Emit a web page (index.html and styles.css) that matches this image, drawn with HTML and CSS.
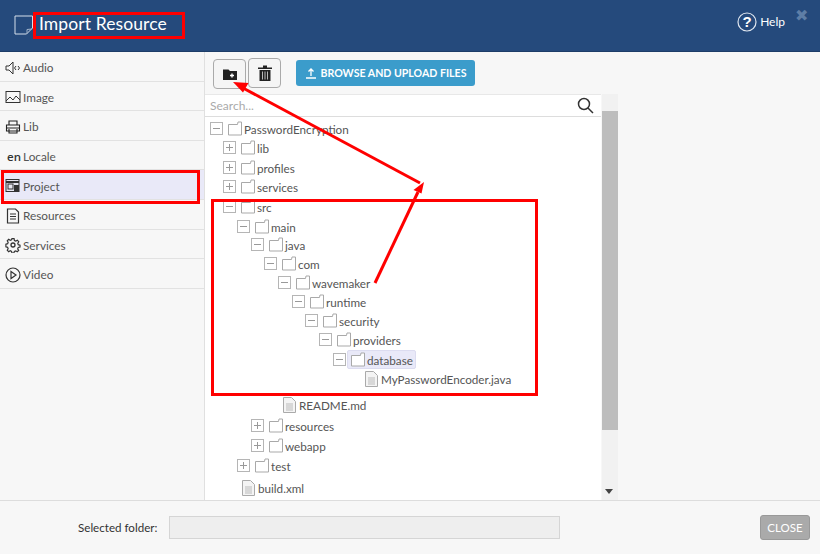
FILE: index.html
```html
<!DOCTYPE html>
<html lang="en">
<head>
<meta charset="utf-8">
<title>Import Resource</title>
<link rel="stylesheet" href="styles.css">
</head>
<body>
<svg width="0" height="0" class="defs">
  <symbol id="folder" viewBox="0 0 16 16"><path d="M1.500 3.500h9l.5-2.500h3.500v13h-13z" fill="#fff" stroke="#a9a9a9"/></symbol>
  <symbol id="plus" viewBox="0 0 13 13"><rect x=".5" y=".5" width="12" height="12" fill="#fff" stroke="#b5b5b5"/><path d="M3 6.500h7M6.500 3v7" stroke="#999"/></symbol>
  <symbol id="minus" viewBox="0 0 13 13"><rect x=".5" y=".5" width="12" height="12" fill="#fff" stroke="#b5b5b5"/><path d="M3 6.500h7" stroke="#999"/></symbol>
  <symbol id="file" viewBox="0 0 13 16"><path d="M.5.5h8l4 4v11H.5z" fill="#f4f4f4" stroke="#aaa"/><path d="M3 7h7M3 9h7M3 11h7M3 13h7" stroke="#bbb"/></symbol>
</svg>
<div class="app">
  <header class="header">
    <svg class="page-icon" width="20" height="20" viewBox="0 0 20 20"><path d="M1 1h17.500v12l-6 6H1z" fill="none" stroke="#d5deea"/><path d="M18 14l-5 .5v4" fill="none" stroke="#9fb2c9"/></svg>
    <h1 class="title">Import Resource</h1>
    <div class="help">
      <svg width="20" height="20" viewBox="0 0 20 20"><circle cx="10" cy="10" r="9" fill="none" stroke="#dfe6ef" stroke-width="1.200"/><text x="10" y="15" text-anchor="middle" class="help-q">?</text></svg>
      <span>Help</span>
    </div>
    <span class="close-x">✖</span>
  </header>
  <div class="main">
    <nav class="side">
      <div class="side-item"><svg width="16" height="16" viewBox="0 0 16 16" fill="none" stroke="#333"><path d="M1 6h3l4-4v12l-4-4H1zM11 6l-1.500 2 1.500 2M13 6l1.500 2-1.500 2"/></svg>Audio</div>
      <div class="side-item"><svg width="16" height="16" viewBox="0 0 16 16" fill="none" stroke="#333"><rect x="1" y="2.500" width="14" height="11"/><path d="M1 12l4-4 3 3 3-4 4 4"/></svg>Image</div>
      <div class="side-item"><svg width="16" height="16" viewBox="0 0 16 16" fill="none" stroke="#222" stroke-width="1.100"><path d="M4 6V2h8v4M1.500 6h13v6h-13zM4 10v4h8v-4M1.500 9h13"/></svg>Lib</div>
      <div class="side-item"><span class="en">en</span>Locale</div>
      <div class="side-item active"><svg width="16" height="16" viewBox="0 0 16 16"><rect x="1" y="1.500" width="13" height="12" fill="#e6e6f0" stroke="#333"/><path d="M1 4h13" stroke="#333" stroke-width="2"/><rect x="3" y="6" width="5" height="5" fill="none" stroke="#333"/><rect x="9" y="7" width="5" height="7" fill="#333"/></svg>Project</div>
      <div class="side-item"><svg width="16" height="16" viewBox="0 0 16 16" fill="none" stroke="#333" stroke-width="1.200"><path d="M2.500 1h8l3 3v11h-11zM5 6h6M5 8.500h6M5 11h6"/></svg>Resources</div>
      <div class="side-item"><svg width="16" height="16" viewBox="0 0 16 16" fill="none" stroke="#333" stroke-width="1.300"><circle cx="8" cy="8" r="2"/><path d="M6.800 1h2.400l.4 2 1.500.7 1.800-1 1.500 1.700-1.100 1.700.5 1.500 2 .5v2.200l-2 .5-.6 1.500 1.100 1.700-1.600 1.500-1.700-1-1.500.6-.5 1.900H6.800l-.4-1.900-1.500-.7-1.700 1-1.600-1.600 1-1.700-.6-1.500-1.900-.5V7l2-.5.5-1.500-1-1.700 1.600-1.600 1.700 1 1.500-.6z" transform="translate(.8 .8) scale(.9)"/></svg>Services</div>
      <div class="side-item"><svg width="16" height="16" viewBox="0 0 16 16" fill="none" stroke="#333" stroke-width="1.200"><circle cx="8" cy="8" r="7"/><path d="M6 4.500L11 8l-5 3.500z"/></svg>Video</div>
    </nav>
    <section class="content">
      <div class="toolbar">
        <button class="tool-btn"><svg width="14" height="12" viewBox="0 0 14 12"><path d="M0 1.500h5.500l1.500 1.500h7v9H0z" fill="#222"/><path d="M7 7.500h4M9 5.500v4" stroke="#fff" stroke-width="1.400"/></svg></button>
        <button class="tool-btn tool-btn-up"><svg width="14" height="16" viewBox="0 0 14 16"><path d="M0 2.500h14v1.500H0zM5 .5h4v2H5z" fill="#222"/><path d="M1.500 5h11v11h-11z" fill="#222"/><path d="M4.500 6.500v8M7 6.500v8M9.500 6.500v8" stroke="#bbb"/></svg></button>
        <button class="upload-btn"><svg width="12" height="12" viewBox="0 0 12 12" fill="none" stroke="#fff" stroke-width="1.300"><path d="M6 9V2M3.500 4.500L6 2l2.500 2.500M1 11h10"/></svg>BROWSE AND UPLOAD FILES</button>
      </div>
      <div class="panes">
        <div class="tree-pane">
          <div class="search"><span class="search-ph">Search...</span>
            <svg width="17" height="17" viewBox="0 0 17 17" fill="none" stroke="#333" stroke-width="1.500"><circle cx="7" cy="7" r="5.500"/><path d="M11 11l5 5"/></svg></div>
          <div class="tree">
            <div class="row l0"><svg class="tog"><use href="#minus"/></svg><svg class="ico"><use href="#folder"/></svg>PasswordEncryption</div>
            <div class="row l1"><svg class="tog"><use href="#plus"/></svg><svg class="ico"><use href="#folder"/></svg>lib</div>
            <div class="row l1 g1"><svg class="tog"><use href="#plus"/></svg><svg class="ico"><use href="#folder"/></svg>profiles</div>
            <div class="row l1"><svg class="tog"><use href="#plus"/></svg><svg class="ico"><use href="#folder"/></svg>services</div>
            <div class="row l1 g1"><svg class="tog"><use href="#minus"/></svg><svg class="ico"><use href="#folder"/></svg>src</div>
            <div class="row l2 g1"><svg class="tog"><use href="#minus"/></svg><svg class="ico"><use href="#folder"/></svg>main</div>
            <div class="row l3 gn"><svg class="tog"><use href="#minus"/></svg><svg class="ico"><use href="#folder"/></svg>java</div>
            <div class="row l4"><svg class="tog"><use href="#minus"/></svg><svg class="ico"><use href="#folder"/></svg>com</div>
            <div class="row l5"><svg class="tog"><use href="#minus"/></svg><svg class="ico"><use href="#folder"/></svg>wavemaker</div>
            <div class="row l6"><svg class="tog"><use href="#minus"/></svg><svg class="ico"><use href="#folder"/></svg>runtime</div>
            <div class="row l7"><svg class="tog"><use href="#minus"/></svg><svg class="ico"><use href="#folder"/></svg>security</div>
            <div class="row l8"><svg class="tog"><use href="#minus"/></svg><svg class="ico"><use href="#folder"/></svg>providers</div>
            <div class="row l9 g1"><svg class="tog"><use href="#minus"/></svg><span class="selected"><svg class="ico"><use href="#folder"/></svg>database</span></div>
            <div class="row l10"><svg class="ico-file"><use href="#file"/></svg>MyPasswordEncoder.java</div>
            <div class="row l4b g7"><svg class="ico-file"><use href="#file"/></svg>README.md</div>
            <div class="row l3 g2"><svg class="tog"><use href="#plus"/></svg><svg class="ico"><use href="#folder"/></svg>resources</div>
            <div class="row l3 g1"><svg class="tog"><use href="#plus"/></svg><svg class="ico"><use href="#folder"/></svg>webapp</div>
            <div class="row l2 g1"><svg class="tog"><use href="#plus"/></svg><svg class="ico"><use href="#folder"/></svg>test</div>
            <div class="row l2b g3"><svg class="ico-file"><use href="#file"/></svg>build.xml</div>
          </div>
        </div>
        <div class="scrollbar"><div class="thumb"></div><span class="arrow"></span></div>
        <div class="right-pane"></div>
      </div>
    </section>
  </div>
  <footer class="footer">
    <label class="folder-label">Selected folder:</label>
    <div class="folder-input"></div>
    <button class="close-btn">CLOSE</button>
  </footer>
</div>
<svg class="annot" width="820" height="554" viewBox="0 0 820 554" fill="none" stroke="#f00">
  <rect x="34.500" y="13.500" width="149" height="24" stroke-width="3"/>
  <rect x="2.500" y="171.500" width="196" height="31" stroke-width="3"/>
  <rect x="212.500" y="200.500" width="324" height="194" stroke-width="3"/>
  <path d="M375 283L418 192" stroke-width="3"/>
  <path d="M424 182l-10.500 8 8 3.500z" fill="#f00" stroke="none"/>
  <path d="M420 183L243 88" stroke-width="3"/>
  <path d="M233 82l15.500 1-5.500 9.500z" fill="#f00" stroke="none"/>
</svg>
</body>
</html>
```
FILE: styles.css
```css
* { box-sizing: border-box; }
html, body { margin: 0; padding: 0; }
body { width: 820px; height: 554px; overflow: hidden; font-family: Lato, "Open Sans", sans-serif; font-size: 12px; color: #444; background: #f7f7f7; position: relative; }
.defs { position: absolute; }
.app { display: flex; flex-direction: column; height: 554px; }

.header { height: 52px; flex: none; background: #254a7c; border-bottom: 1px solid #1d3d68; display: flex; align-items: center; padding: 0 10px 4px 14px; color: #fff; }
.page-icon { margin-right: 5px; margin-top: 2px; }
.title { margin: 0; font-size: 17.500px; font-weight: 400; flex: 1; letter-spacing: .1px; }
.help { display: flex; align-items: center; gap: 3px; font-size: 12px; margin-right: 10px; margin-top: -4px; }
.help-q { font: 700 15px "Liberation Sans", sans-serif; fill: #fff; }
.close-x { color: #5e7ea6; font-size: 16px; margin-top: -17px; width: 15px; }

.main { flex: 1; display: flex; min-height: 0; }
.side { width: 205px; flex: none; border-right: 1px solid #e0e0e0; background: #f7f7f7; }
.side-item { height: 29.600px; display: flex; align-items: center; padding: 3px 0 0 5px; gap: 2px; font-size: 11.800px; color: #555; border-bottom: 1px solid #e2e2e2; }
.side-item svg { flex: none; }
.side-item.active { background: #e9e9f8; }
.en { font: 600 11.500px "Open Sans", sans-serif; color: #333; width: 16px; margin-left: 2px; margin-right: -2px; }

.content { flex: 1; display: flex; flex-direction: column; min-width: 0; }
.toolbar { height: 42px; flex: none; display: flex; align-items: flex-start; padding: 6px 0 0 8px; gap: 2px; }
.tool-btn { width: 33px; height: 30px; margin-top: 1px; border: 1px solid #aaa; border-radius: 4px; background: #f5f5f5; padding: 0; display: flex; align-items: center; justify-content: center; }
.tool-btn-up { margin-top: 0; }
.upload-btn { margin-left: 13px; margin-top: 2px; width: 179px; height: 26px; border: 0; border-radius: 3px; background: #3b9ccb; color: #fff; font: 700 10.600px Lato, sans-serif; display: flex; align-items: center; justify-content: center; gap: 4px; padding: 0; }

.panes { flex: 1; display: flex; min-height: 0; }
.tree-pane { width: 396px; flex: none; background: #fff; overflow: hidden; border-top: 1px solid #e8e8e8; }
.search { height: 22px; display: flex; justify-content: space-between; align-items: center; padding: 0 7px 0 5px; border-bottom: 1px solid #ddd; }
.search-ph { color: #aaa; font-size: 12px; }
.tree { padding-top: 2px; }
.row { height: 19px; display: flex; align-items: center; font-size: 11.700px; color: #555; white-space: nowrap; }
.g1 { margin-top: 1px; }
.g2 { margin-top: 2px; }
.g3 { margin-top: 3px; }
.g7 { margin-top: 7px; }
.gn { margin-top: -1px; }
.tog { width: 13px; height: 13px; margin-right: 4px; flex: none; }
.ico { width: 16px; height: 16px; margin-right: 1px; flex: none; }
.ico-file { width: 13px; height: 16px; margin-right: 3px; flex: none; }
.l0 { padding-left: 5px; }
.l1 { padding-left: 18px; }
.l2 { padding-left: 32px; }
.l3 { padding-left: 46px; }
.l4 { padding-left: 59px; }
.l5 { padding-left: 73px; }
.l6 { padding-left: 87px; }
.l7 { padding-left: 100px; }
.l8 { padding-left: 114px; }
.l9 { padding-left: 128px; }
.l10 { padding-left: 160px; }
.l4b { padding-left: 78px; }
.l2b { padding-left: 37px; }
.selected { display: flex; align-items: center; background: #e9e9f8; border: 1px solid #dcdcf0; border-radius: 2px; height: 19px; padding: 0 2px; margin-left: -3px; }

.scrollbar { width: 16px; margin-left: 1px; flex: none; background: #f1f1f1; position: relative; }
.thumb { margin-top: 17px; height: 319px; background: #bdbdbd; }
.arrow { position: absolute; left: 3px; bottom: 6px; border: 4px solid transparent; border-top: 5px solid #444; border-bottom: 0; }
.right-pane { flex: 1; }

.footer { height: 54px; flex: none; border-top: 1px solid #ddd; background: #f7f7f7; display: flex; align-items: center; padding: 0 10px 0 78px; }
.folder-label { font-size: 11.600px; color: #333; width: 91px; }
.folder-input { width: 391px; height: 23px; background: #eee; border: 1px solid #d5d5d5; }
.close-btn { margin-left: auto; width: 50px; height: 25px; border: 1px solid #999; border-radius: 3px; background: #aaa; color: #fff; font: 400 11.500px Lato, sans-serif; padding: 0; }

.annot { position: absolute; left: 0; top: 0; pointer-events: none; }
```
